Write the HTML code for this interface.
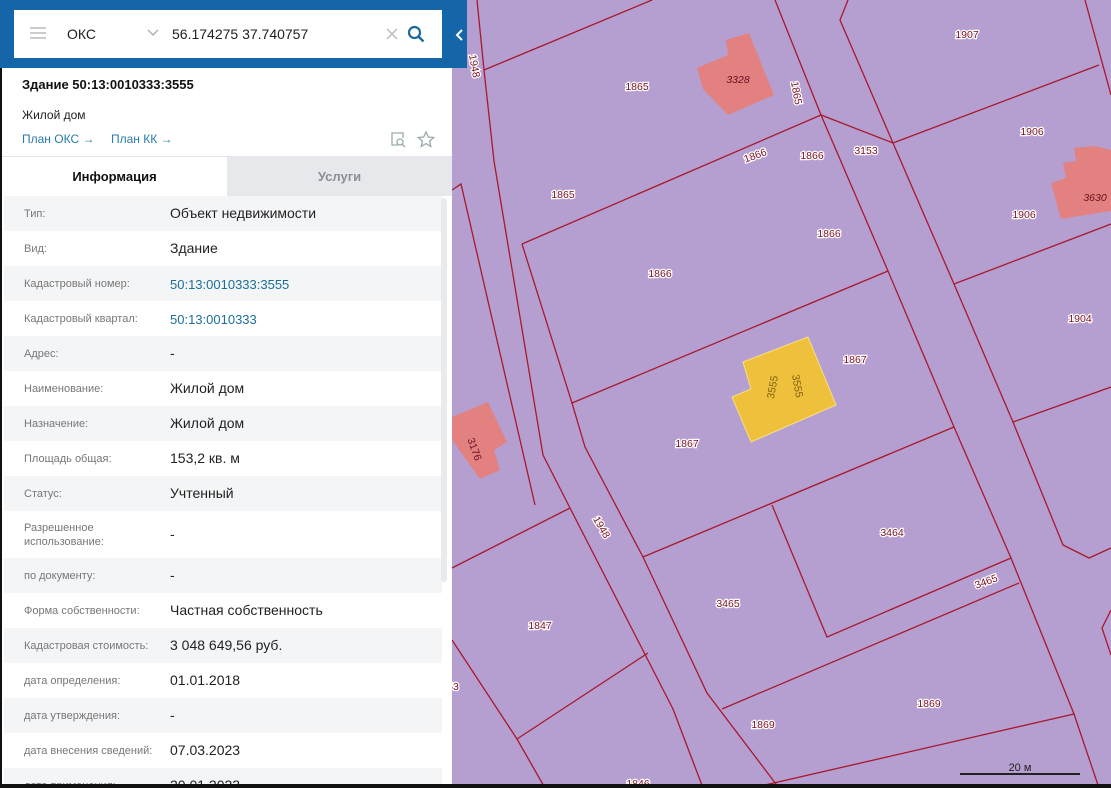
<!DOCTYPE html>
<html style="width:1111px;height:788px;overflow:hidden"><head><meta charset="utf-8"><style>
*{margin:0;padding:0;box-sizing:border-box}
body{width:1111px;height:788px;overflow:hidden;position:relative;background:#b59fd1;font-family:"Liberation Sans","Noto Sans CJK SC",sans-serif}
#map{position:absolute;left:0;top:0}
#panel{position:absolute;left:0;top:0;width:452px;height:788px;overflow:hidden;background:#fff;border-left:2px solid #111}
#top{position:absolute;left:0;top:0;width:467px;height:68px;background:#1565a9}
#search{position:absolute;left:14px;top:10px;width:428px;height:48px;background:#fff}
.row{position:absolute;left:2px;width:438px;height:35px}
.row.g{background:#f4f5f7}
.lab{position:absolute;left:20px;font-size:11px;color:#777;line-height:14px}
.val{position:absolute;left:166px;font-size:14px;color:#222}
.val a{color:#1a6f98;text-decoration:none;font-size:13px}
</style></head><body>
<svg id="map" width="1111" height="788" xmlns="http://www.w3.org/2000/svg">
<g fill="#e2817f">
<polygon points="697,68 728,55 726,40 749,33 774,95 728,115 703,89"/>
<polygon points="1051,183 1066,178 1063,163 1076,161 1074,148 1095,146 1111,150 1111,211 1061,219"/>
<polygon points="452,417 488,402 507,442 494,450 500,470 480,479 452,440"/>
</g>
<polygon points="743,362 808,337 836,405 751,442 732,397 751,389" fill="#efc03c" stroke="#f6e080" stroke-width="1"/>
<g fill="none" stroke="#a8182e" stroke-width="1.3">
<polyline points="477,0 484,70 494,161 543,455 570,508 673,709 703,788"/>
<polyline points="522,244 572,403 585,447 643,557 707,693 779,788"/>
<polyline points="484,70 652,0"/>
<polyline points="522,244 821,115 893,143"/>
<polyline points="775,0 821,115 888,271 954,427 1011,558 1074,714 1099,788"/>
<polyline points="893,143 954,284 1013,422 1063,545 1089,558 1111,548"/>
<polyline points="893,143 1099,65"/>
<polyline points="848,0 840,20 893,143"/>
<polyline points="954,284 1111,224"/>
<polyline points="1013,422 1111,387"/>
<polyline points="1085,0 1111,95"/>
<polyline points="572,403 888,271"/>
<polyline points="643,557 954,427"/>
<polyline points="772,505 827,637 1011,558"/>
<polyline points="722,709 1019,583"/>
<polyline points="752,788 1074,714"/>
<polyline points="452,568 570,508"/>
<polyline points="517,739 648,653"/>
<polyline points="452,640 517,739 545,788"/>
<polyline points="452,190 461,184 535,505"/>
<polyline points="1111,610 1102,628 1111,655"/>
</g>
<g font-size="10.5" fill="#7a1020" text-anchor="middle" stroke="#fff" stroke-width="2.5" paint-order="stroke" font-family="Liberation Sans,sans-serif">
<text x="967" y="38">1907</text><text x="637" y="90">1865</text>
<text x="738" y="83" font-style="italic" stroke="none" fill="#6a1020">3328</text>
<text x="1095" y="201" font-style="italic" stroke="none" fill="#6a1020">3630</text>
<text x="755" y="159" transform="rotate(-20 755 155)">1866</text>
<text x="812" y="159">1866</text><text x="866" y="154">3153</text>
<text x="1032" y="135">1906</text><text x="563" y="198">1865</text>
<text x="1024" y="218">1906</text><text x="829" y="237">1866</text>
<text x="660" y="277">1866</text><text x="1080" y="322">1904</text>
<text x="855" y="363">1867</text><text x="687" y="447">1867</text>
<text x="892" y="536">3464</text><text x="986" y="585" transform="rotate(-20 986 581)">3465</text>
<text x="728" y="607">3465</text><text x="540" y="629">1847</text>
<text x="929" y="707">1869</text><text x="763" y="728">1869</text>
<text x="638" y="787">1846</text><text x="453" y="690">53</text>
<text x="797" y="97" transform="rotate(80 797 93)">1865</text>
<text x="475" y="70" transform="rotate(80 475 66)">1948</text>
<text x="602" y="531" transform="rotate(60 602 527)">1948</text>
<text x="475" y="453" transform="rotate(70 475 449)" stroke="none" fill="#6a1020">3176</text>
<text x="772" y="391" transform="rotate(-80 772 387)" stroke="none" fill="#806010">3555</text>
<text x="798" y="390" transform="rotate(80 798 386)" stroke="none" fill="#806010">3555</text>
</g>
<text x="1020" y="771" font-size="11" fill="#222" text-anchor="middle">20 м</text>
<line x1="960" y1="774" x2="1080" y2="774" stroke="#222" stroke-width="2"/>
</svg>

<div id="panel">
<div class="row g" style="top:196px"><span class="lab" style="top:11px">Тип:</span><span class="val" style="top:9px">Объект недвижимости</span></div>
<div class="row" style="top:231px"><span class="lab" style="top:11px">Вид:</span><span class="val" style="top:9px">Здание</span></div>
<div class="row g" style="top:266px"><span class="lab" style="top:11px">Кадастровый номер:</span><span class="val" style="top:10px"><a>50:13:0010333:3555</a></span></div>
<div class="row" style="top:301px"><span class="lab" style="top:11px">Кадастровый квартал:</span><span class="val" style="top:10px"><a>50:13:0010333</a></span></div>
<div class="row g" style="top:336px"><span class="lab" style="top:11px">Адрес:</span><span class="val" style="top:9px">-</span></div>
<div class="row" style="top:371px"><span class="lab" style="top:11px">Наименование:</span><span class="val" style="top:9px">Жилой дом</span></div>
<div class="row g" style="top:406px"><span class="lab" style="top:11px">Назначение:</span><span class="val" style="top:9px">Жилой дом</span></div>
<div class="row" style="top:441px"><span class="lab" style="top:11px">Площадь общая:</span><span class="val" style="top:9px">153,2 кв. м</span></div>
<div class="row g" style="top:476px"><span class="lab" style="top:11px">Статус:</span><span class="val" style="top:9px">Учтенный</span></div>
<div class="row" style="top:511px;height:47px"><span class="lab" style="top:10px">Разрешенное<br>использование:</span><span class="val" style="top:15px">-</span></div>
<div class="row g" style="top:558px"><span class="lab" style="top:11px">по документу:</span><span class="val" style="top:9px">-</span></div>
<div class="row" style="top:593px"><span class="lab" style="top:11px">Форма собственности:</span><span class="val" style="top:9px">Частная собственность</span></div>
<div class="row g" style="top:628px"><span class="lab" style="top:11px">Кадастровая стоимость:</span><span class="val" style="top:9px">3 048 649,56 руб.</span></div>
<div class="row" style="top:663px"><span class="lab" style="top:11px">дата определения:</span><span class="val" style="top:9px">01.01.2018</span></div>
<div class="row g" style="top:698px"><span class="lab" style="top:11px">дата утверждения:</span><span class="val" style="top:9px">-</span></div>
<div class="row" style="top:733px"><span class="lab" style="top:11px">дата внесения сведений:</span><span class="val" style="top:9px">07.03.2023</span></div>
<div class="row g" style="top:768px;height:20px"><span class="lab" style="top:11px">дата применения:</span><span class="val" style="top:9px">20.01.2023</span></div>
<div style="position:absolute;left:439px;top:198px;width:6px;height:384px;background:#e9eaec;border-radius:3px"></div>

<div style="position:absolute;left:20px;top:77px;font-size:13px;font-weight:bold;color:#111">Здание 50:13:0010333:3555</div>
<div style="position:absolute;left:20px;top:108px;font-size:12px;color:#222">Жилой дом</div>
<div style="position:absolute;left:20px;top:132px;font-size:12px;color:#2a7bab">План ОКС →</div>
<div style="position:absolute;left:109px;top:132px;font-size:12px;color:#2a7bab">План КК →</div>
<svg style="position:absolute;left:386px;top:130px" width="50" height="20"><g fill="none" stroke="#9aa" stroke-width="1.3"><path d="M10 15H4V3h11v5"/><circle cx="12" cy="12" r="3"/><path d="M14 14l3 3"/><path d="M38 2l2.3 5 5.4.5-4.1 3.6 1.2 5.3-4.8-2.8-4.8 2.8 1.2-5.3-4.1-3.6 5.4-.5z"/></g></svg>
<div style="position:absolute;left:0;top:156px;width:450px;height:1px;background:#e4e6ea"></div>
<div style="position:absolute;left:225px;top:157px;width:225px;height:39px;background:#e6e8ec;color:#8a8e96;font-size:13px;font-weight:bold;text-align:center;line-height:39px">Услуги</div>
<div style="position:absolute;left:0;top:157px;width:225px;height:39px;color:#111;font-size:13px;font-weight:bold;text-align:center;line-height:39px">Информация</div>
</div>
<div style="position:absolute;left:0;top:784px;width:1111px;height:4px;background:#111"></div>

<div id="top">
<div id="search">
<div style="position:absolute;left:16px;top:17px;width:16px;height:2px;background:#ccc;box-shadow:0 5px 0 #ccc,0 10px 0 #ccc"></div>
<div style="position:absolute;left:53px;top:16px;font-size:14px;color:#222">ОКС</div>
<svg style="position:absolute;left:133px;top:19px" width="12" height="8"><path d="M1 1l5 5 5-5" fill="none" stroke="#aaa" stroke-width="1.3"/></svg>
<div style="position:absolute;left:158px;top:16px;font-size:14px;color:#222">56.174275 37.740757</div>
<svg style="position:absolute;left:372px;top:18px" width="12" height="12"><path d="M1 1l10 10M11 1L1 11" stroke="#bbb" stroke-width="1.4"/></svg>
<svg style="position:absolute;left:393px;top:15px" width="18" height="18"><circle cx="7.5" cy="7.5" r="5.5" fill="none" stroke="#1b6a9c" stroke-width="2.2"/><path d="M11.5 11.5l5 5" stroke="#1b6a9c" stroke-width="2.4"/></svg>
</div>
<svg style="position:absolute;left:455px;top:28px" width="10" height="14"><path d="M7 2L2 7l5 5" fill="none" stroke="#fff" stroke-width="2"/></svg>
</div>
</body></html>
